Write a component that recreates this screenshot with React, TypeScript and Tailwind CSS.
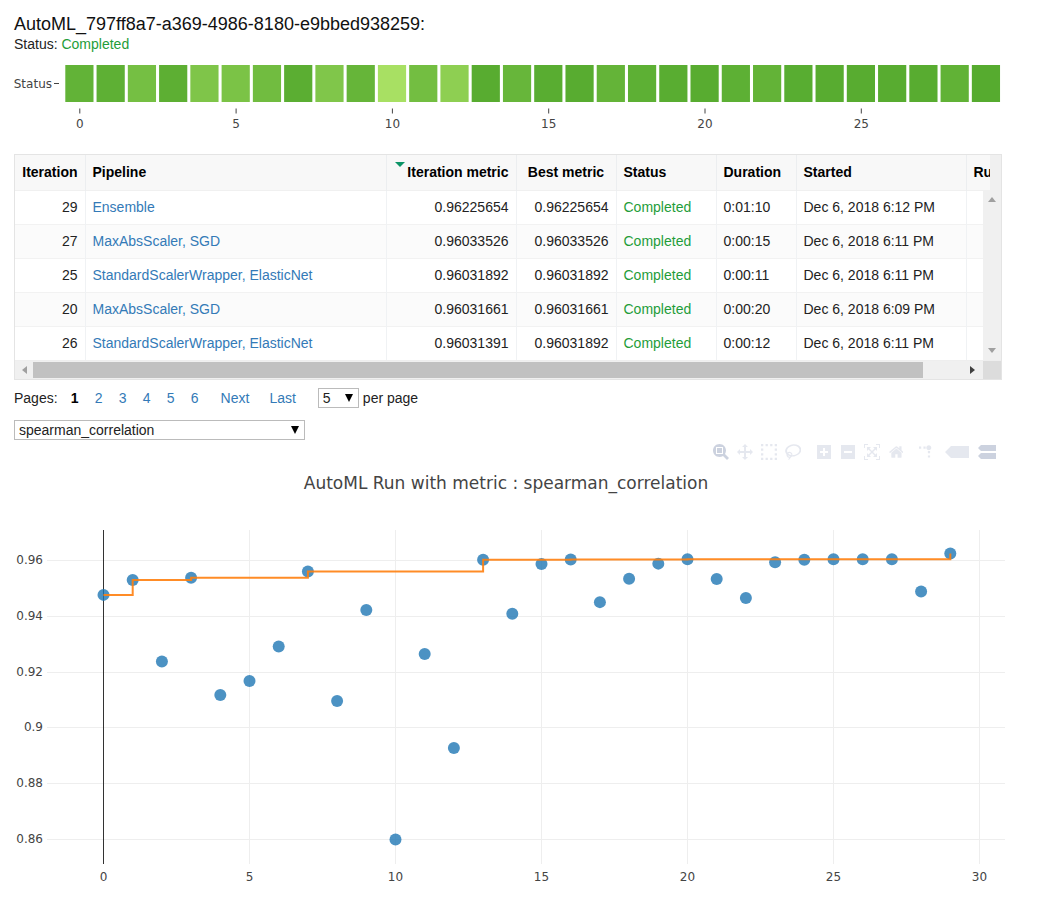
const metrics = [
  0.9475, 0.9528, 0.9236, 0.9536, 0.9116, 0.9166, 0.929, 0.9559, 0.9095, 0.9421,
  0.8598, 0.9263, 0.8926, 0.9601, 0.9407, 0.9586, 0.9602, 0.9449, 0.9533, 0.9587,
  0.9603, 0.9532, 0.9464, 0.9592, 0.9601, 0.9603, 0.9603, 0.9603, 0.9487, 0.9623,
];

const rows = [
  { iteration: 29, pipeline: "Ensemble", metric: "0.96225654", best: "0.96225654", duration: "0:01:10", started: "Dec 6, 2018 6:12 PM" },
  { iteration: 27, pipeline: "MaxAbsScaler, SGD", metric: "0.96033526", best: "0.96033526", duration: "0:00:15", started: "Dec 6, 2018 6:11 PM" },
  { iteration: 25, pipeline: "StandardScalerWrapper, ElasticNet", metric: "0.96031892", best: "0.96031892", duration: "0:00:11", started: "Dec 6, 2018 6:11 PM" },
  { iteration: 20, pipeline: "MaxAbsScaler, SGD", metric: "0.96031661", best: "0.96031661", duration: "0:00:20", started: "Dec 6, 2018 6:09 PM" },
  { iteration: 26, pipeline: "StandardScalerWrapper, ElasticNet", metric: "0.96031391", best: "0.96031892", duration: "0:00:12", started: "Dec 6, 2018 6:11 PM" },
];

const flip = "matrix(1 0 0 -1 0 850)";

const toolGroups = [
  [
    { label: "Zoom", width: 1000, active: true, transform: flip, d: "m1000-25l-250 251c40 63 63 138 63 218 0 224-182 406-407 406-224 0-406-182-406-406s183-406 407-406c80 0 155 22 218 62l250-250 125 125z m-812 250l0 438 437 0 0-438-437 0z m62 375l313 0 0-312-313 0 0 312z" },
    { label: "Pan", width: 1000, transform: flip, d: "m1000 350l-187 188 0-125-250 0 0 250 125 0-188 187-187-187 125 0 0-250-250 0 0 125-188-188 186-187 0 125 252 0 0-250-125 0 187-188 188 188-125 0 0 250 250 0 0-126 187 188z" },
    { label: "Box Select", width: 1000, transform: flip, d: "m0 850l0-143 143 0 0 143-143 0z m286 0l0-143 143 0 0 143-143 0z m285 0l0-143 143 0 0 143-143 0z m286 0l0-143 143 0 0 143-143 0z m-857-286l0-143 143 0 0 143-143 0z m857 0l0-143 143 0 0 143-143 0z m-857-285l0-143 143 0 0 143-143 0z m857 0l0-143 143 0 0 143-143 0z m-857-286l0-143 143 0 0 143-143 0z m286 0l0-143 143 0 0 143-143 0z m285 0l0-143 143 0 0 143-143 0z m286 0l0-143 143 0 0 143-143 0z" },
    { label: "Lasso Select", width: 1031, transform: flip, d: "m1018 538c-36 207-290 336-568 286-277-48-473-256-436-463 10-57 36-108 76-151-13-66 11-137 68-183 34-28 75-41 114-42l-55-70 0 0c-2-1-3-2-4-3-10-14-8-34 5-45 14-11 34-8 45 4 1 1 2 3 2 5l0 0 113 140c16 11 31 24 45 40 4 3 6 7 8 11 48-3 100 0 151 9 278 48 473 255 436 462z m-624-379c-80 14-149 48-197 96 42 42 109 47 156 9 33-26 47-66 41-105z m-187-74c-19 16-33 37-39 60 50-32 109-55 174-68-42-25-95-24-135 8z m360 75c-34-7-69-9-102-8 8 62-16 128-68 170-73 59-175 54-244-5-9 20-16 40-20 61-28 159 121 317 333 354s407-60 434-217c28-159-121-318-333-355z" },
  ],
  [
    { label: "Zoom in", width: 875, transform: flip, d: "m1 787l0-875 875 0 0 875-875 0z m687-500l-187 0 0-187-125 0 0 187-188 0 0 125 188 0 0 187 125 0 0-187 187 0 0-125z" },
    { label: "Zoom out", width: 875, transform: flip, d: "m0 788l0-876 875 0 0 876-875 0z m688-500l-500 0 0 125 500 0 0-125z" },
    { label: "Autoscale", width: 1000, transform: flip, d: "m250 850l-187 0-63 0 0-62 0-188 63 0 0 188 187 0 0 62z m688 0l-188 0 0-62 188 0 0-188 62 0 0 188 0 62-62 0z m-875-938l0 188-63 0 0-188 0-62 63 0 187 0 0 62-187 0z m875 188l0-188-188 0 0-62 188 0 62 0 0 62 0 188-62 0z m-125 188l-1 0-93-94-156 156 156 156 92-93 2 0 0 250-250 0 0-2 93-92-156-156-156 156 94 92 0 2-250 0 0-250 0 0 93 93 157-156-157-156-93 94 0 0 0-250 250 0 0 0-94 93 156 157 156-157-93-93 0 0 250 0 0 250z" },
    { label: "Reset axes", width: 928, transform: flip, d: "m786 296v-267q0-15-11-26t-25-10h-214v214h-143v-214h-214q-15 0-25 10t-11 26v267q0 1 0 2t0 2l321 264 321-264q1-1 1-4z m124 39l-34-41q-5-5-12-6h-2q-7 0-12 3l-386 322-386-322q-7-4-13-4-7 2-12 7l-35 41q-4 5-3 13t6 12l401 334q18 15 42 15t43-15l136-114v109q0 8 5 13t13 5h107q8 0 13-5t5-13v-227l122-102q5-5 6-12t-4-13z" },
  ],
  [
    { label: "Toggle spike lines", width: 1000, transform: "matrix(1.5 0 0 -1.5 0 850)", d: "M512 409c0-57-46-104-103-104-57 0-104 47-104 104 0 57 47 103 104 103 57 0 103-46 103-103z m-327-39l92 0 0 92-92 0z m-185 0l92 0 0 92-92 0z m370-186l92 0 0 93-92 0z m0-184l92 0 0 92-92 0z" },
    { label: "Show closest data on hover", width: 1500, transform: flip, d: "m375 725l0 0-375-375 375-374 0-1 1125 0 0 750-1125 0z" },
    { label: "Compare data on hover", width: 1125, active: true, transform: flip, d: "m187 786l0 2-187-188 188-187 0 0 937 0 0 373-938 0z m0-499l0 1-187-188 188-188 0 0 937 0 0 376-938-1z" },
  ],
];

// light green for the worst run, dark green for the best one
const cellColor = (value: number) => {
  const min = Math.min(...metrics);
  const max = Math.max(...metrics);
  const t = (value - min) / (max - min);
  const mix = (a: number, b: number) => Math.round(a + (b - a) * t);
  return `rgb(${mix(168, 86)}, ${mix(224, 171)}, ${mix(99, 47)})`;
};

const StatusBar = () => {
  return (
    <svg viewBox="0 0 991 76" className="block w-full overflow-visible font-['DejaVu_Sans'] text-[12px]" fill="#444">
      <text x="38" y="28" textAnchor="end">Status</text>
      <path d="M40 23.5h5" stroke="#444" />
      {metrics.map((value, i) => (
        <rect key={i} x={51.3 + i * 31.26} y="5" width="28.2" height="37" fill={cellColor(value)} />
      ))}
      {[0, 5, 10, 15, 20, 25].map((tick) => (
        <g key={tick}>
          <path d={`M${65.8 + tick * 31.26} 48.5v5`} stroke="#444" />
          <text x={65.8 + tick * 31.26} y="68" textAnchor="middle">{tick}</text>
        </g>
      ))}
    </svg>
  );
};

const px = (i: number) => 89.5 + i * 29.2;
const py = (value: number) => 96 + (0.96 - value) * 2790;

const MetricChart = () => {
  let best = metrics[0];
  let line = `M${px(0)} ${py(best)}`;
  metrics.forEach((value, i) => {
    best = Math.max(best, value);
    line += `H${px(i)}V${py(best)}`;
  });

  return (
    <svg viewBox="0 0 991 430" className="block w-full overflow-visible font-['DejaVu_Sans'] text-[12px]" fill="#444">
      <text x="492" y="25" textAnchor="middle" className="text-[17px]">AutoML Run with metric : spearman_correlation</text>
      {[0.96, 0.94, 0.92, 0.9, 0.88, 0.86].map((tick) => (
        <g key={tick}>
          <path d={`M33 ${Math.round(py(tick)) + 0.5}H991`} stroke="#eee" />
          <text x="29" y={py(tick) + 4} textAnchor="end">{tick}</text>
        </g>
      ))}
      {[0, 5, 10, 15, 20, 25, 30].map((tick) => (
        <g key={tick}>
          <path d={`M${px(tick)} 66V400`} stroke={tick === 0 ? "#333" : "#eee"} />
          <text x={px(tick)} y="417" textAnchor="middle">{tick}</text>
        </g>
      ))}
      {metrics.map((value, i) => (
        <circle key={i} cx={px(i)} cy={py(value)} r="6" fill="#1f77b4" fillOpacity="0.8" />
      ))}
      <path d={line} fill="none" stroke="#ff7f0e" strokeOpacity="0.9" strokeWidth="2" />
    </svg>
  );
};

const RunsTable = () => {
  return (
    <div className="mr-[3px] border border-[#e4e4e4]">
      <div className="relative overflow-hidden">
        <table className="w-[1200px] table-fixed border-collapse whitespace-nowrap [&_td]:px-[7px] [&_th]:px-[7px] [&_td]:border-r [&_th]:border-r [&_td]:border-[#f0f2f4] [&_th]:border-[#eceef0] [&_td]:py-0 [&_th]:py-0">
          <colgroup>
            <col className="w-[70px]" />
            <col className="w-[301px]" />
            <col className="w-[130px]" />
            <col className="w-[100px]" />
            <col className="w-[100px]" />
            <col className="w-[80px]" />
            <col className="w-[170px]" />
            <col />
          </colgroup>
          <thead>
            <tr className="h-[35px] bg-[#f8f8f8] border-b border-[#f0f0f0] text-left font-bold text-black">
              <th className="text-right">Iteration</th>
              <th>Pipeline</th>
              <th>
                <div className="flex justify-end gap-[2px]">
                  <svg width="10" height="5" viewBox="0 0 10 5" className="shrink-0"><path d="M0 0h10L5 5z" fill="#0d9467" /></svg>
                  Iteration metric
                </div>
              </th>
              <th className="text-center">Best metric</th>
              <th>Status</th>
              <th>Duration</th>
              <th>Started</th>
              <th>Run Id</th>
            </tr>
          </thead>
          <tbody>
            {rows.map((row) => (
              <tr key={row.iteration} className="h-[34px] border-b border-[#f2f2f2] last:border-0 even:bg-[#fbfbfb]">
                <td className="text-right">{row.iteration}</td>
                <td><a href="#" className="text-[#337ab7]">{row.pipeline}</a></td>
                <td className="text-right">{row.metric}</td>
                <td className="text-right">{row.best}</td>
                <td className="text-[#1f9d3a]">Completed</td>
                <td>{row.duration}</td>
                <td>{row.started}</td>
                <td></td>
              </tr>
            ))}
          </tbody>
        </table>
        {/* vertical scrollbar */}
        <div className="absolute right-0 top-0 h-[35px] w-[11px] bg-[#f0f0f0]"></div>
        <div className="absolute bottom-0 right-0 top-[35px] flex w-[18px] flex-col items-center justify-between bg-[#f0f0f0] py-[7px]">
          <svg width="8" height="5" viewBox="0 0 8 5"><path d="M4 0l4 5H0z" fill="#a0a0a0" /></svg>
          <svg width="8" height="5" viewBox="0 0 8 5"><path d="M0 0h8L4 5z" fill="#a0a0a0" /></svg>
        </div>
      </div>
      {/* horizontal scrollbar */}
      <div className="flex h-[19px] items-center border-t border-[#eee] bg-[#f0f0f0]">
        <div className="flex w-[18px] justify-center">
          <svg width="5" height="8" viewBox="0 0 5 8"><path d="M5 0v8L0 4z" fill="#a0a0a0" /></svg>
        </div>
        <div className="h-4 flex-1 bg-[#c1c1c1]"></div>
        <div className="flex w-[60px] justify-end pr-2">
          <svg width="5" height="8" viewBox="0 0 5 8"><path d="M0 0v8l5-4z" fill="#404040" /></svg>
        </div>
        <div className="h-full w-[18px] bg-[#dcdcdc]"></div>
      </div>
    </div>
  );
};

const Arrow = () => (
  <svg width="8" height="8" viewBox="0 0 8 8" className="pointer-events-none col-start-1 row-start-1 mr-[6px] self-center justify-self-end">
    <path d="M0 0h8L4 8z" fill="#000" />
  </svg>
);

const Pager = () => {
  return (
    <div className="mt-2 flex h-5 items-center">
      <span>Pages:</span>
      <nav className="ml-[5px] flex items-center text-[#337ab7]">
        <span className="w-6 text-center font-bold text-black">1</span>
        {[2, 3, 4, 5, 6].map((page) => (
          <a key={page} href="#" className="w-6 text-center">{page}</a>
        ))}
        <a href="#" className="ml-[14px]">Next</a>
        <a href="#" className="ml-5">Last</a>
      </nav>
      <div className="ml-[22px] grid">
        <select id="per-page" defaultValue="5" className="col-start-1 row-start-1 h-5 w-[41px] appearance-none border border-[#bbb] bg-white pl-1 leading-[18px]">
          <option>5</option>
          <option>10</option>
          <option>20</option>
        </select>
        <Arrow />
      </div>
      <label htmlFor="per-page" className="ml-1">per page</label>
    </div>
  );
};

const App = () => {
  return (
    <div className="min-h-screen bg-white pb-3 pl-[14px] pr-9 pt-[14px] font-['Liberation_Sans',sans-serif] text-[14px] leading-5 text-[#222]">
      <h1 className="text-[18px] leading-5 text-[#111]">AutoML_797ff8a7-a369-4986-8180-e9bbed938259:</h1>
      <p>Status: <span className="text-[#1f9d3a]">Completed</span></p>
      <div className="mb-[18px] mt-[6px]">
        <StatusBar />
      </div>
      <RunsTable />
      <Pager />
      <div className="mt-3 grid w-[291px]">
        <select aria-label="Metric" className="col-start-1 row-start-1 h-5 w-full appearance-none border border-[#bbb] bg-white pl-1 leading-[18px]">
          <option>spearman_correlation</option>
        </select>
        <Arrow />
      </div>
      {/* chart tools */}
      <div className="mr-[6px] mt-1 flex h-4 items-center justify-end gap-[7px]">
        {toolGroups.map((group, g) => (
          <div key={g} className="flex last:gap-[6px]">
            {group.map((tool) => (
              <button key={tool.label} type="button" aria-label={tool.label} className={tool.active ? "flex min-w-6 justify-center text-[#001f5f]/20" : "flex min-w-6 justify-center text-[#001f5f]/10"}>
                <svg viewBox={`0 0 ${tool.width} 1000`} className="block h-4" fill="currentColor">
                  <path d={tool.d} transform={tool.transform} />
                </svg>
              </button>
            ))}
          </div>
        ))}
      </div>
      <div className="mt-1">
        <MetricChart />
      </div>
    </div>
  );
};

export default App;
